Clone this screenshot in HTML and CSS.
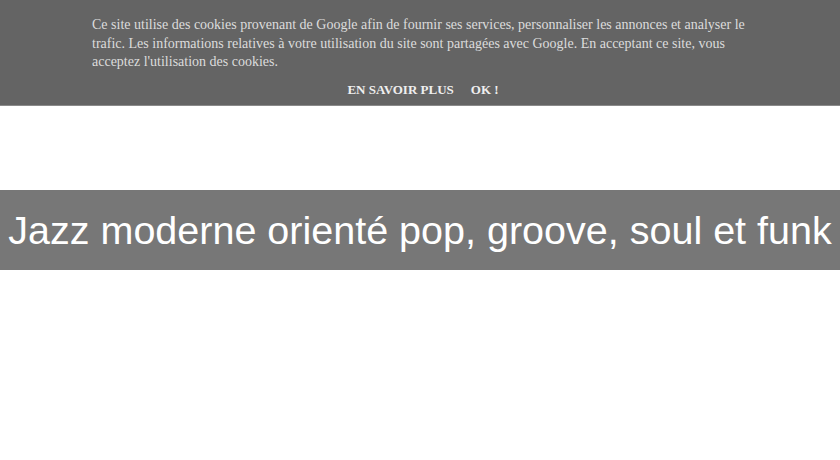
FILE: index.html
```html
<!DOCTYPE html>
<html lang="fr">
<head>
    <meta charset="utf-8">
    <title>Jazz moderne orienté pop, groove, soul et funk</title>
    <link rel="stylesheet" href="styles.css">
</head>
<body>

    <div class="cookie-bar">
        <p class="cookie-text">Ce site utilise des cookies provenant de Google afin de fournir ses services, personnaliser les annonces et analyser le trafic. Les informations relatives à votre utilisation du site sont partagées avec Google. En acceptant ce site, vous acceptez l'utilisation des cookies.</p>
        <div class="cookie-actions">
            <a href="#" class="cookie-link">En savoir plus</a>
            <a href="#" class="cookie-link">Ok !</a>
        </div>
    </div>

    <div class="header">
        <h1 class="title">Jazz moderne orienté pop, groove, soul et funk</h1>
    </div>

</body>
</html>
```

FILE: styles.css
```css
* {
    margin: 0;
    padding: 0;
}
body {
    background: #fff;
    font-family: "Liberation Sans", Arial, sans-serif;
}
a {
    text-decoration: none;
}
.cookie-bar {
    height: 106px;
    background: #646464;
    border-bottom: 1px solid #8a8a8a;
    box-sizing: border-box;
    padding-top: 16px;
}
.cookie-text {
    width: 656px;
    margin: 0 auto;
    font: 14px/18.5px "Liberation Serif", "Times New Roman", serif;
    color: #dcdcdc;
}
.cookie-actions {
    display: flex;
    justify-content: center;
    gap: 17px;
    margin-top: 9px;
    padding-left: 6px;
}
.cookie-link {
    font: bold 13px/18px "Liberation Serif", "Times New Roman", serif;
    text-transform: uppercase;
    color: #efefef;
}
.header {
    margin-top: 84px;
    height: 80px;
    background: #777;
    display: flex;
    align-items: center;
    justify-content: center;
}
.title {
    font-weight: normal;
    font-size: 39.5px;
    line-height: 44px;
    color: #fff;
    white-space: nowrap;
}
```
